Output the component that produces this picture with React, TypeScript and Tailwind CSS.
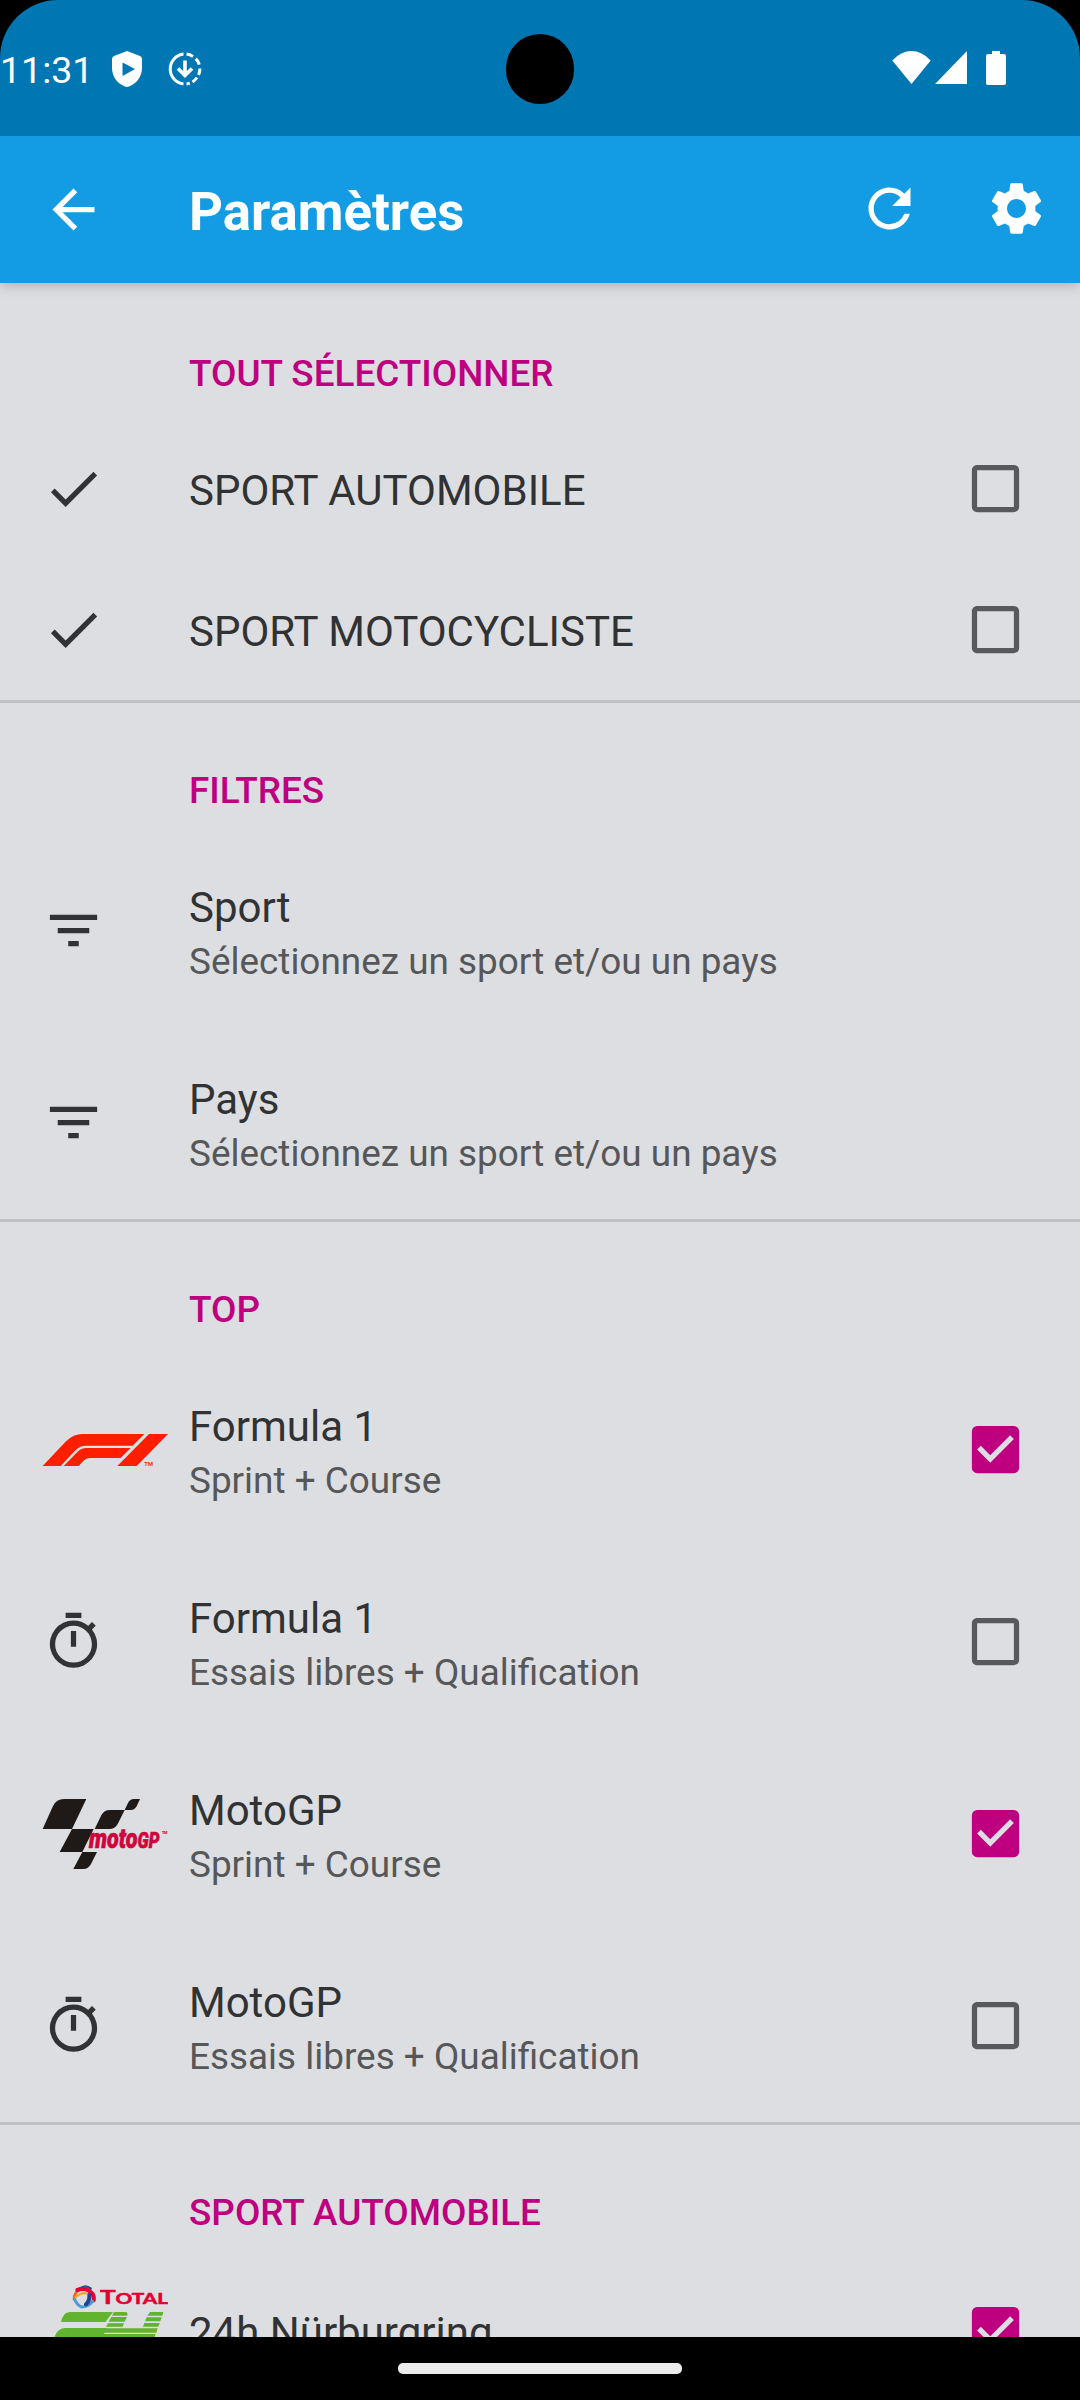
import type { ReactNode } from 'react'
import {
  MdArrowBack,
  MdCheck,
  MdCheckBox,
  MdCheckBoxOutlineBlank,
  MdFilterList,
  MdRefresh,
  MdSettings,
} from 'react-icons/md'

type Item = {
  icon: ReactNode
  title: string
  summary?: string
  checked?: boolean
  height?: string
}

type Section = {
  title: string
  items: Item[]
}

const sections: Section[] = [
  {
    title: 'TOUT SÉLECTIONNER',
    items: [
      { icon: <MdCheck size={63} />, title: 'SPORT AUTOMOBILE', checked: false },
      { icon: <MdCheck size={63} />, title: 'SPORT MOTOCYCLISTE', checked: false },
    ],
  },
  {
    title: 'FILTRES',
    items: [
      { icon: <MdFilterList size={63} />, title: 'Sport', summary: 'Sélectionnez un sport et/ou un pays' },
      { icon: <MdFilterList size={63} />, title: 'Pays', summary: 'Sélectionnez un sport et/ou un pays' },
    ],
  },
  {
    title: 'TOP',
    items: [
      { icon: <F1Logo />, title: 'Formula 1', summary: 'Sprint + Course', checked: true },
      { icon: <TimerIcon />, title: 'Formula 1', summary: 'Essais libres + Qualification', checked: false },
      { icon: <MotoGPLogo />, title: 'MotoGP', summary: 'Sprint + Course', checked: true },
      { icon: <TimerIcon />, title: 'MotoGP', summary: 'Essais libres + Qualification', checked: false },
    ],
  },
  {
    title: 'SPORT AUTOMOBILE',
    items: [{ icon: <Total24hLogo />, title: '24h Nürburgring', checked: true, height: 'h-[147px]' }],
  },
]

export default function App() {
  return (
    <div className="w-[1080px] h-[2400px] bg-black flex flex-col overflow-hidden font-['Roboto',sans-serif]">
      <StatusBar />
      <AppBar />

      <main className="h-[2054px] shrink-0 overflow-hidden bg-[#dddee1]">
        {sections.map((section, i) => (
          <section key={section.title}>
            <h2
              className={`h-[135px] flex items-center pl-[189px] pt-[43px] border-t-[3px] text-[36.9px] leading-[48px] font-medium text-[#be0080] ${
                i === 0 ? 'border-transparent' : 'border-[#c0c1c5]'
              }`}
            >
              {section.title}
            </h2>
            {section.items.map((item, j) => (
              <SettingRow key={j} {...item} />
            ))}
          </section>
        ))}
      </main>

      {/* Navigation bar */}
      <footer className="h-[63px] shrink-0 flex justify-center pt-[26px]">
        <div className="w-[284px] h-[11px] rounded-[5px] bg-[#ececec]" />
      </footer>
    </div>
  )
}

function StatusBar() {
  return (
    <header className="relative h-[136px] shrink-0 bg-black">
      <div className="h-full flex items-start pt-[46px] pr-[74px] bg-[#0076b3] rounded-t-[58px] text-white">
        <span className="text-[37.5px] leading-[48px] w-[112px]">11:31</span>
        <svg className="mt-[5px] w-[30px] h-[36px]" viewBox="0 0 30 36" fill="currentColor">
          <path
            fillRule="evenodd"
            d="M15 0 28 5q2 .8 2 3v9c0 9-6 16-13 18.500q-2 .8-4 0C6 33 0 26 0 17V8q0-2.200 2-3ZM10.500 12.500q0-1.200 1-.6L23 18 11.500 24.600q-1 .5-1-.6Z"
          />
        </svg>
        <svg
          className="ml-[26px] mt-[6px] w-[34px] h-[34px]"
          viewBox="0 0 34 34"
          fill="none"
          stroke="currentColor"
          strokeWidth="3"
        >
          <path d="M15.500 2.100A15 15 0 0 0 15.500 31.900" />
          <path d="M18.500 2.100a15 15 0 0 1 6.500 2.300M27.800 6.600a15 15 0 0 1 3.500 6M31.900 16.500a15 15 0 0 1-1.300 6.500M29 25.500a15 15 0 0 1-4.500 4.400M21.800 31.100a15 15 0 0 1-3.300.8" />
          <path d="M17 8.500v13.500M10 16.500l7 7 7-7" strokeWidth="3.600" />
        </svg>
        <div className="flex-1" />
        <svg className="mt-[5px] w-[39px] h-[33px]" viewBox="0 0 39 33" fill="currentColor">
          <path d="M19.500 33 .3 9.500Q9 0 19.500 0t19.200 9.500Z" />
        </svg>
        <svg className="ml-[4px] mt-[5px] w-[32px] h-[33px]" viewBox="0 0 32 33" fill="currentColor">
          <path d="M32 0v33H0Z" />
        </svg>
        <svg className="ml-[19px] mt-[5px] w-[20px] h-[34px]" viewBox="0 0 20 34" fill="currentColor">
          <path d="M6 0h8v3h4q2 0 2 2v27q0 2-2 2H2q-2 0-2-2V5q0-2 2-2h4Z" />
        </svg>
      </div>
      {/* Camera cutout */}
      <div className="absolute left-[506px] top-[34px] w-[68px] h-[70px] rounded-full bg-black" />
    </header>
  )
}

function AppBar() {
  return (
    <nav className="relative h-[147px] shrink-0 flex items-center pl-[42px] pr-[32px] bg-[#139ce4] text-white shadow-[0_3px_12px_rgba(0,0,0,0.2)] [clip-path:inset(0_0_-20px_0)]">
      <MdArrowBack size={63} className="mr-[84px]" />
      <h1 className="flex-1 text-[52.8px] font-bold leading-[62px] pt-[4px]">Paramètres</h1>
      <div className="flex gap-[64px] -mt-[2px]">
        <MdRefresh size={63} />
        <MdSettings size={63} />
      </div>
    </nav>
  )
}

function SettingRow({ icon, title, summary, checked, height }: Item) {
  return (
    <div
      className={`flex items-center pl-[42px] pr-[53px] ${height ?? (summary ? 'h-[192px] pb-px' : 'h-[141px]')}`}
    >
      <div className="w-[147px] shrink-0 text-[#303234]">{icon}</div>
      <div className={`flex-1 ${summary ? 'pt-[5px]' : 'pt-[4px]'}`}>
        <div className="text-[42px] leading-[56px] text-[#303234]">{title}</div>
        {summary && <div className="mt-[2px] text-[36.9px] leading-[48px] text-[#555759]">{summary}</div>}
      </div>
      {checked === true && <MdCheckBox size={63} className="text-[#be0080]" />}
      {checked === false && <MdCheckBoxOutlineBlank size={63} className="text-[#58595b]" />}
    </div>
  )
}

function TimerIcon() {
  return (
    <svg className="w-[63px] h-[63px]" viewBox="0 0 24 24" fill="currentColor">
      <path d="M15 1H9v2h6V1zm-4 13h2V8h-2v6zm8.030-6.610l1.420-1.420c-.43-.51-.9-.99-1.410-1.410l-1.420 1.420A8.962 8.962 0 0 0 12 4a9 9 0 1 0 7.030 3.390zM12 20c-3.870 0-7-3.130-7-7s3.130-7 7-7 7 3.130 7 7-3.130 7-7 7z" />
    </svg>
  )
}

function F1Logo() {
  return (
    <svg className="w-[126px] h-[42px]" viewBox="36 87 378 126" fill="#ff1e00">
      <path d="M38 198 108 124Q130 102 158 102H343L308 137H168Q150 137 137 150L92 198Z" />
      <path d="M101 198 142 156Q153 144 170 144H302L272 174H182Q168 174 160 183L146 198Z" />
      <path d="M262 198 357 102H414L320 198Z" />
      <text x="343" y="198" fontSize="17" fontWeight="700" textLength="26" className="font-['Roboto',sans-serif]">
        TM
      </text>
    </svg>
  )
}

function MotoGPLogo() {
  return (
    <svg className="w-[126px] h-[70px]" viewBox="36 57 378 210" fill="#1f1a17">
      <path d="M38 147 69 78Q79 57 102 57H169L126 147Z" />
      <path d="M126 147H191L157 216H89Z" />
      <path d="M157 216H201L183 252Q175 267 160 267H130Z" />
      <path d="M194 147 214 106Q222 90 240 90H284L263 132Q255 147 238 147Z" />
      <path d="M284 90 294 69Q300 57 312 57H330L320 79Q314 90 303 90Z" />
      <text
        x="177"
        y="205"
        fontSize="82"
        fontWeight="900"
        fontStyle="italic"
        textLength="211"
        lengthAdjust="spacingAndGlyphs"
        fill="#d0043c"
        stroke="#d0043c"
        strokeWidth="2"
        className="font-['Roboto',sans-serif]"
      >
        moto<tspan fontSize="64">GP</tspan>
      </text>
      <text
        x="395"
        y="163"
        fontSize="13"
        fontWeight="700"
        textLength="18"
        fill="#d0043c"
        className="font-['Roboto',sans-serif]"
      >
        TM
      </text>
    </svg>
  )
}

function Total24hLogo() {
  return (
    <svg className="w-[126px] h-[91px]" viewBox="6 45 378 273">
      {/* Globe */}
      <g fill="none" strokeLinecap="round">
        <path d="M121 57Q102 68 102 88" stroke="#e8662c" strokeWidth="8" />
        <path d="M118 56Q138 42 152 56" stroke="#2d4a9c" strokeWidth="7" />
        <path d="M112 60Q140 50 158 72Q163 82 161 91" stroke="#e3002f" strokeWidth="12" />
        <path d="M106 82Q124 66 140 70" stroke="#f2a630" strokeWidth="7" />
        <path d="M104 88Q110 104 124 111Q146 110 158 94" stroke="#4a9bdc" strokeWidth="9" />
        <path d="M148 74Q150 92 138 103" stroke="#1f4590" strokeWidth="12" />
      </g>
      <text
        x="180"
        y="101"
        fontSize="54"
        fontWeight="700"
        textLength="204"
        lengthAdjust="spacingAndGlyphs"
        fill="#e3002f"
        stroke="#e3002f"
        strokeWidth="1.5"
        className="font-['Lato',sans-serif]"
      >
        T<tspan fontSize="43">OTAL</tspan>
      </text>
      {/* Striped numerals */}
      <g fill="#62b32e">
        <path d="M89 126H219L196 156H63Q70 126 89 126Z" />
        <path d="M77 174H201L187 202H43Q52 174 77 174Z" />
        <path d="M222 126H258Q264 128 262 137H216Z" />
        <path d="M214 141H261L254 155H206Z" />
        <path d="M204 160H252L248 170H198Z" />
        <path d="M197 175H353L349 188H190Z" />
        <path d="M189 192H347L342 206H184Z" />
        <path d="M330 126H370L367 137H322Z" />
        <path d="M320 142H365L361 154H315Z" />
        <path d="M313 159H359L355 170H309Z" />
      </g>
    </svg>
  )
}
